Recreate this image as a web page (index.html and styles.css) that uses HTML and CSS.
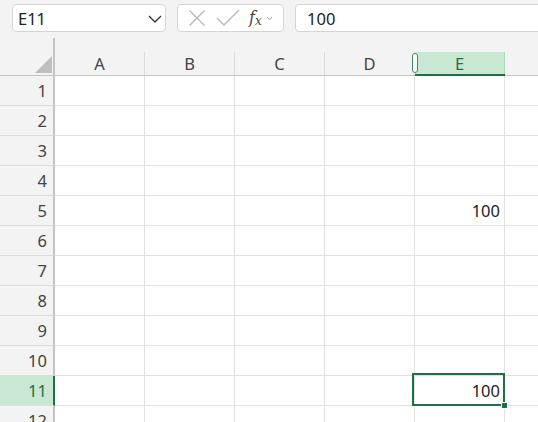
FILE: index.html
```html
<!DOCTYPE html>
<html>
<head>
	<meta charset="utf-8">
	<title>Book1</title>
	<link rel="stylesheet" href="styles.css">
</head>
<body>
<div class="bar">
	<div class="namebox">
		<span>E11</span>
		<svg class="caret" width="14" height="8" viewBox="0 0 14 8"><path d="M1 1 L7 7 L13 1" fill="none" stroke="#333" stroke-width="1.3"/></svg>
	</div>
	<div class="fxbox">
		<svg width="18" height="18" viewBox="0 0 18 18"><path d="M1.5 1.5 L16.5 16.5 M16.5 1.5 L1.5 16.5" stroke="#b8b8b8" stroke-width="1.4" fill="none"/></svg>
		<svg width="24" height="18" viewBox="0 0 24 18"><path d="M1 9 L8 16 L23 1" stroke="#b8b8b8" stroke-width="1.4" fill="none"/></svg>
		<span class="fx">f<sub>x</sub></span>
		<svg width="7" height="5" viewBox="0 0 7 5"><path d="M1 1 L3.5 4 L6 1" fill="none" stroke="#aaa" stroke-width="1"/></svg>
	</div>
	<div class="formula">100</div>
</div>

<div class="sheet">
	<div class="corner"><div class="tri"></div></div>
	<div class="colhead"><div>A</div></div>
	<div class="colhead"><div>B</div></div>
	<div class="colhead"><div>C</div></div>
	<div class="colhead"><div>D</div></div>
	<div class="colhead sel"><div>E</div><i class="grip"></i></div>
	<div class="colhead last"><div></div></div>
</div>

<script>
	// build the rows, with the two values in column E
	var sheet = document.querySelector('.sheet');
	var values = {5: '100', 11: '100'};
	for (var r = 1; r <= 12; r++) {
		var html = '<div class="rowhead' + (r == 11 ? ' sel' : '') + '">' + r + '</div>';
		for (var c = 0; c < 6; c++) {
			var v = (c == 4 && values[r]) ? values[r] : '';
			var cls = 'cell' + (c == 5 ? ' last' : '') + (c == 4 && r == 11 ? ' active' : '');
			html += '<div class="' + cls + '">' + v + (c == 4 && r == 11 ? '<i class="handle"></i>' : '') + '</div>';
		}
		sheet.innerHTML += html;
	}
</script>
</body>
</html>
```

FILE: styles.css
```css
html,body{margin:0;padding:0;overflow:hidden;height:422px;}
body{font-family:"Noto Sans","Open Sans",sans-serif;background:#f3f3f3;color:#222;}

.bar{display:flex;align-items:flex-start;padding:4px 0 0 12px;height:34px;gap:11px;}
.namebox,.fxbox,.formula{background:#fff;border:1px solid #d4d4d4;border-radius:4px;height:28px;box-sizing:border-box;}
.namebox{width:154px;display:flex;align-items:center;justify-content:space-between;padding:0 3px 0 5px;font-size:16.5px;}
.namebox .caret{margin-top:2px;}
.fxbox{width:107px;display:flex;align-items:center;padding:0 0 0 10px;gap:10px;}
.fxbox .fx{font-family:"DejaVu Serif",serif;font-style:italic;font-size:16px;color:#444;margin-left:-1px;margin-right:-6px;}
.fxbox .fx sub{font-size:12px;vertical-align:-2px;}
.formula{flex:1;margin-right:-10px;font-size:16.5px;padding:0 0 0 11px;display:flex;align-items:center;}

.sheet{display:grid;grid-template-columns:55px repeat(5,90px) 1fr;grid-auto-rows:30px;grid-template-rows:38px;background:#fff;}

.corner{background:#f3f3f3;border-right:2px solid #c4c4c4;border-bottom:1px solid #c4c4c4;box-sizing:border-box;display:flex;align-items:flex-end;justify-content:flex-end;padding:0 1px 2px 0;}
.corner .tri{width:0;height:0;border-left:17px solid transparent;border-bottom:17px solid #bfbfbf;}

.colhead{background:#f3f3f3;border-bottom:1px solid #c4c4c4;box-sizing:border-box;padding-top:14px;position:relative;}
.colhead div{height:23px;border-right:1px solid #dcdcdc;box-sizing:border-box;text-align:center;font-size:16.5px;line-height:23px;color:#444;}
.colhead.last div{border-right:none;}
.colhead.sel{border-bottom:2px solid #1e7145;}
.colhead.sel div{background:#c8e8d4;color:#1e7145;height:22px;border-right:1px solid #a8dcbc;}
.grip{position:absolute;left:-3px;top:15px;width:4px;height:18px;border:1.5px solid #3d8a5c;border-radius:3px;background:#fff;}

.rowhead{background:#f3f3f3;border-right:2px solid #c4c4c4;border-bottom:1px solid #dcdcdc;box-sizing:border-box;text-align:right;padding-right:6px;font-size:16.5px;line-height:30px;color:#444;}
.rowhead.sel{background:#c8e8d4;color:#1e7145;border-right-color:#1e7145;}

.cell{border-right:1px solid #e1e1e1;border-bottom:1px solid #e1e1e1;box-sizing:border-box;text-align:right;padding-right:4px;font-size:16.5px;line-height:30px;position:relative;}
.cell.last{border-right:none;}
/* selection frame sits over the neighbouring grid lines */
.cell.active::after{content:"";position:absolute;left:-3px;top:-3px;right:-1px;bottom:-1px;border:2px solid #1e7145;}
.handle{position:absolute;right:-4px;bottom:-4px;width:5px;height:5px;background:#1e7145;border:1px solid #fff;z-index:1;}
```
